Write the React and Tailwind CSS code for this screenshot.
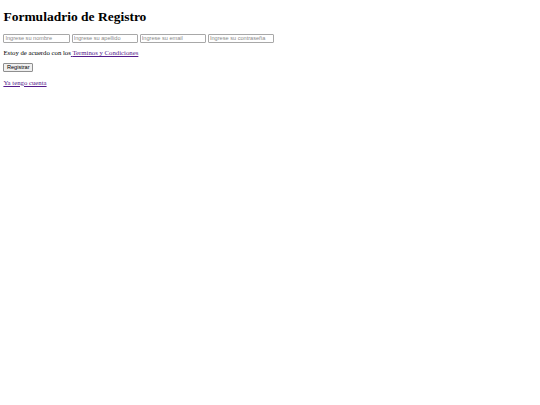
const serif = { fontFamily: '"Liberation Serif", "Times New Roman", serif' };
const sans = { fontFamily: '"Liberation Sans", Arial, sans-serif' };

const fields = [
  "Ingrese su nombre",
  "Ingrese su apellido",
  "Ingrese su email",
  "Ingrese su contraseña",
];

export default function App() {
  return (
    <div
      className="min-h-[405px] w-[540px] bg-white px-[3.4px] pt-[9px] text-black"
      style={serif}
    >
      <h1 className="text-[13.5px] font-bold leading-[15.5px]">
        Formuladrio de Registro
      </h1>

      <form className="pt-[9px] text-[6.75px] leading-[7.8px]">
        <div className="flex gap-[1.7px]">
          {fields.map((f) => (
            <input
              key={f}
              type="text"
              placeholder={f}
              className="h-[9px] w-[66.5px] rounded-[1px] border border-[#a8a8a8] px-[1px] text-[5.6px] leading-none outline-none placeholder:text-[#8a8a8a]"
              style={sans}
            />
          ))}
        </div>

        <p className="mt-[6.75px]">
          Estoy de acuerdo con los
          <a href="#" className="text-[#551a8b] underline">
            {" "}Terminos y Condiciones
          </a>
        </p>

        <div className="mt-[6px] flex">
          <button
            type="button"
            className="h-[9px] rounded-[1px] border border-[#8f8f8f] bg-[#efefef] px-[2.5px] text-[5.6px] leading-none"
            style={sans}
          >
            Registrar
          </button>
        </div>

        <p className="mt-[6.75px]">
          <a href="#" className="text-[#551a8b] underline">
            Ya tengo cuenta
          </a>
        </p>
      </form>
    </div>
  );
}
